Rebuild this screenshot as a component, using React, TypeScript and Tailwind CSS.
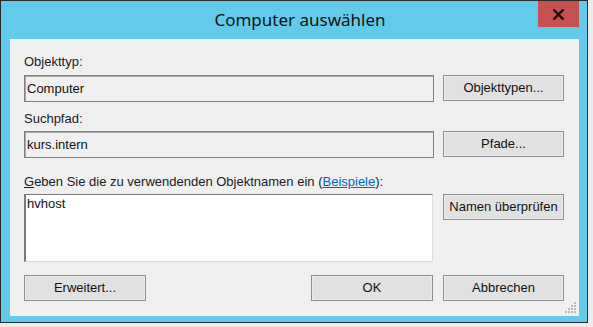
import React from 'react';

const ui = { fontFamily: '"Liberation Sans", Arial, sans-serif' };

function Btn({ label, w = 'w-[121px]' }: { label: React.ReactNode; w?: string }) {
  return (
    <button
      className={`${w} h-[26px] shrink-0 border border-[#8f8f8f] bg-[#e1e1e1] text-[13px] text-[#111] shadow-[inset_0_0_0_1px_#ececec]`}
      style={ui}
    >
      {label}
    </button>
  );
}

function Field({ value }: { value: string }) {
  return (
    <div className="w-[410px] h-[27px] shrink-0 border border-[#7f7f7f] bg-[#f0f0f0] shadow-[inset_1px_1px_0_#a9a9a9] flex items-center pl-[2px] text-[13px] text-[#111]">
      {value}
    </div>
  );
}

function SizeGrip() {
  const dots = [
    [9, 0],
    [6, 3], [9, 3],
    [3, 6], [6, 6], [9, 6],
    [0, 9], [3, 9], [6, 9], [9, 9],
  ];
  return (
    <svg width="11" height="11" className="absolute right-[3px] bottom-[3px]">
      {dots.map(([x, y], i) => (
        <rect key={i} x={x} y={y} width="2" height="2" fill="#b8b8b8" />
      ))}
    </svg>
  );
}

export default function App() {
  return (
    <div className="w-[593px] h-[327px] bg-[#ececec] overflow-hidden" style={ui}>
      <div className="w-[588px] h-[323px] border border-[#2b2b2b] bg-[#62cbea] flex flex-col">
        {/* title bar */}
        <div className="relative h-[38px] shrink-0 flex items-start justify-center pt-[6px] pl-[12px]">
          <span
            className="text-[17px] text-[#111]"
            style={{ fontFamily: '"Noto Sans", "Open Sans", sans-serif' }}
          >
            Computer auswählen
          </span>
          <div className="absolute top-0 right-[8px] w-[41px] h-[26px] bg-[#c75050] flex items-center justify-center">
            <svg width="13" height="11" viewBox="0 0 13 11">
              <path d="M1.5 0.5 L11.5 10.5 M11.5 0.5 L1.5 10.5" stroke="#111" strokeWidth="2.4" />
            </svg>
          </div>
        </div>

        {/* client area */}
        <div className="relative mx-[8px] ml-[9px] h-[277px] bg-[#f0f0f0] px-[14px] pt-[15px] flex flex-col text-[13px] text-[#1a1a1a]">
          <div className="leading-[16px]">Objekttyp:</div>
          <div className="mt-[5px] flex gap-[9px]">
            <Field value="Computer" />
            <Btn label="Objekttypen..." />
          </div>

          <div className="mt-[9px] leading-[16px]">Suchpfad:</div>
          <div className="mt-[4px] flex gap-[9px]">
            <Field value="kurs.intern" />
            <Btn label="Pfade..." />
          </div>

          <div className="mt-[16px] leading-[16px]">
            <span className="underline">G</span>eben Sie die zu verwendenden Objektnamen ein (
            <span className="text-[#0066cc] underline">Beispiele</span>):
          </div>
          <div className="mt-[4px] flex gap-[10px] items-start">
            <div className="w-[409px] h-[68px] shrink-0 border border-[#dcdcdc] border-l-[#7a7a7a] border-t-[#7a7a7a] border-l-2 bg-white pl-[1px] pt-[1px] leading-[16px] text-[#111]">
              hvhost
            </div>
            <Btn label="Namen überprüfen" />
          </div>

          <div className="mt-[13px] flex">
            <Btn label="Erweitert..." w="w-[122px]" />
            <div className="ml-[165px] flex gap-[10px]">
              <Btn label="OK" w="w-[122px]" />
              <Btn label="Abbrechen" />
            </div>
          </div>

          <SizeGrip />
        </div>
      </div>
    </div>
  );
}
